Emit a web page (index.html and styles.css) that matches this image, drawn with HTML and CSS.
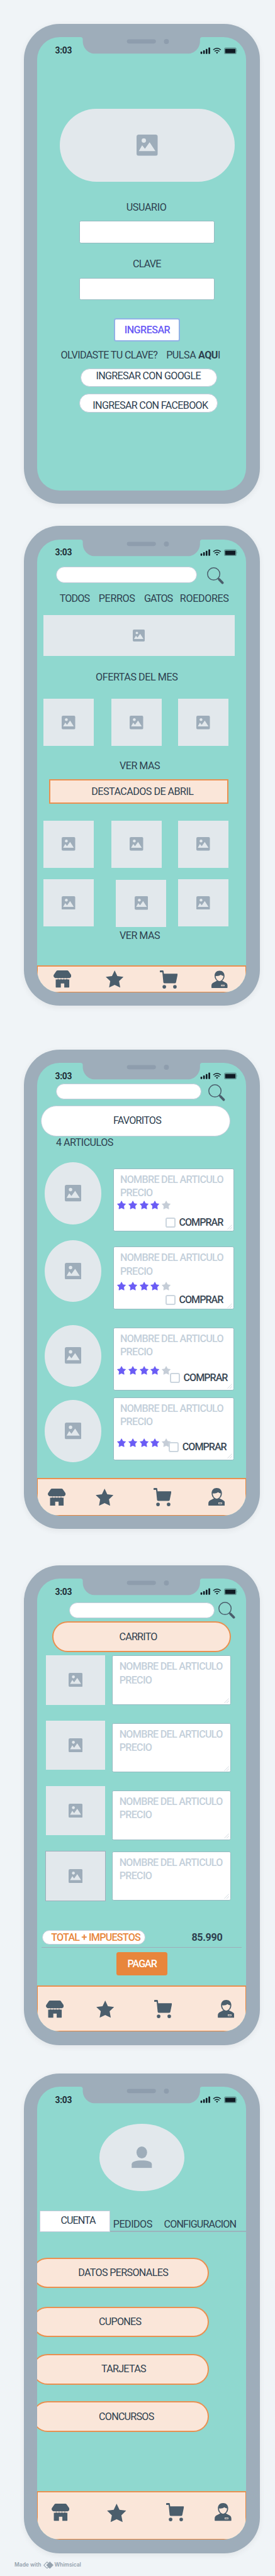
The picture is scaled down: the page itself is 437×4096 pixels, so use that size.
FILE: index.html
```html
<!DOCTYPE html>
<html lang="es">
<head>
<meta charset="utf-8">
<title>Tienda de mascotas</title>
<link rel="stylesheet" href="styles.css">
</head>
<body>
<svg class="defs" aria-hidden="true">
  <symbol id="notch" viewBox="0 0 218 30">
    <path fill="#9eadba" d="M0-1V0Q4 0 4 4V7C4 20 14 30 27 30H191C204 30 214 20 214 7V4Q214 0 218 0V-1Z"/>
    <rect x="83" y="4" width="52" height="7.5" rx="3.75" fill="#8e9dad"/>
    <circle cx="153.8" cy="8" r="4.5" fill="#8e9dad"/>
  </symbol>
  <symbol id="signal" viewBox="0 0 68 13">
    <g fill="#111b24"><rect x=".7" y="8" width="3" height="4" rx="1"/><rect x="5.4" y="5.6" width="3" height="6.4" rx="1"/><rect x="10.1" y="3.1" width="3" height="8.9" rx="1"/><rect x="14.9" y=".7" width="3" height="11.3" rx="1"/>
    <path d="M28.3 9.4q2-1.4 4 0l-2 2.4z"/><rect x="45" y="3" width="18.2" height="7.6" rx="1"/></g>
    <g fill="none" stroke="#111b24" stroke-width="1.8"><path d="M23.6 4.8q6.7-5.6 13.4 0"/><path d="M26 7.6q4.3-3.4 8.6 0"/></g>
    <rect x="43" y=".6" width="22.3" height="12.2" rx="3" fill="#111b24" opacity=".32"/>
    <path d="M66 4.6q1.6 2 0 4z" fill="#111b24" opacity=".4"/>
  </symbol>
  <symbol id="image" viewBox="0 0 38 38">
    <rect width="38" height="38" rx="4" fill="#9eadba"/>
    <circle cx="13" cy="10.8" r="3.9" fill="#e2e8ec"/>
    <path fill="#e2e8ec" d="M4 29.7 10 19.3 15 25.5 23.4 13.7 33.8 29.7Z"/>
  </symbol>
  <symbol id="search" viewBox="0 0 31 31">
    <circle cx="12" cy="12" r="11.1" fill="none" stroke="#4b5e6c" stroke-width="1.7"/>
    <path d="M19.5 19.5 22 22" stroke="#4b5e6c" stroke-width="2.4"/>
    <path d="M22 22 27.8 28" stroke="#4b5e6c" stroke-width="4.4" stroke-linecap="round"/>
  </symbol>
  <symbol id="store" viewBox="0 0 32 31">
    <path d="M7.5 0H24.5Q26 0 26.8 1L31.3 7.6Q33 10.5 30.5 12.8Q28.5 14.6 26 13.4Q23.8 14.8 21 13.5Q18.5 14.8 16 13.5Q13.5 14.8 11 13.5Q8.2 14.8 6 13.4Q3.5 14.6 1.5 12.8Q-1 10.5 .7 7.6L5.2 1Q6 0 7.5 0Z"/>
    <path d="M4 16.2Q6.5 17 8.5 15.6Q11 17 13.5 15.6Q16 17 18.5 15.6Q21 17 23.5 15.6Q26 17 28.3 16.2V30Q28.3 31 27.3 31H19.3V23.5H13.2V31H5Q4 31 4 30Z"/>
  </symbol>
  <symbol id="star" viewBox="0 0 32 31">
    <path d="M16 0 20.8 10.1 31.9 11.5 23.9 19.3 26 30.7 16 25.9 6 30.7 8.1 19.3 .1 11.5 11.2 10.1Z"/>
  </symbol>
  <symbol id="rate" viewBox="0 0 16 16">
    <path stroke-width="1" stroke-linejoin="round" stroke="currentColor" fill="currentColor" d="M8 .8 10.4 5.3 15.4 6.1 11.9 9.8 12.6 15 8 12.9 3.4 15 4.1 9.8 .6 6.1 5.6 5.3Z"/>
  </symbol>
  <symbol id="cart" viewBox="0 0 32 33">
    <path d="M1 0H5Q6.5 0 6.7 1.5L7.2 6H31Q32.2 6 31.9 7.2L28.9 21.8Q28.6 23 27.3 23H8Q6.5 23 6.3 21.5L4.5 3.5H1Q0 3.5 0 2.5V1Q0 0 1 0Z"/>
    <circle cx="8" cy="29.4" r="3.2"/><circle cx="27" cy="29.4" r="3.2"/>
  </symbol>
  <symbol id="user" viewBox="0 0 30 32">
    <path d="M15 0C20.5 0 24.2 3.8 24.2 9.5C24.2 13.5 22.6 16.5 20 18.3C22.5 21 30 21.5 30 27.5V31Q30 32 29 32H1Q0 32 0 31V27.5C0 21.5 7.5 21 10 18.3C7.4 16.5 5.8 13.5 5.8 9.5C5.8 3.8 9.5 0 15 0Z"/>
    <path fill="#fae6d9" d="M7.8 9.7Q13.5 10.3 17.5 7.6Q19.5 9.5 22.2 9.7C22.2 15 18.5 19.3 15 19.3S7.8 15 7.8 9.7Z"/>
    <rect x="18.4" y="26.5" width="5.6" height="1.9" fill="none" stroke="#fae6d9" stroke-width=".9"/>
  </symbol>
  <symbol id="person" viewBox="0 0 37 39">
    <ellipse cx="18.4" cy="10.7" rx="9.5" ry="10.7"/>
    <path d="M.3 38.6V32C.3 27 8 25 18.4 25S36.500 27 36.500 32V38.6Z"/>
  </symbol>
  <symbol id="grip" viewBox="0 0 9 9"><path d="M.5 8.5 8.5 .5M4.5 8.5 8.5 4.5" stroke="#c9d2da" stroke-width=".9"/></symbol>
</svg>

<main class="board">
  <section class="phone login">
    <div class="screen">
      <header class="status"><span class="time">3:03</span><svg class="notch"><use href="#notch"/></svg><svg class="signal"><use href="#signal"/></svg></header>
      <div class="hero ph"><svg><use href="#image"/></svg></div>
      <label class="t lb-user k4">USUARIO</label>
      <div class="field f1"></div>
      <label class="t lb-key k8">CLAVE</label>
      <div class="field f2"></div>
      <div class="enter t">INGRESAR</div>
      <div class="forgot"><span class="t k7">OLVIDASTE TU CLAVE?</span><span class="t pulsa k5">PULSA <b>AQU</b>I</span></div>
      <div class="pill google"><span class="t k7">INGRESAR CON GOOGLE</span></div>
      <div class="pill facebook"><span class="t k7">INGRESAR CON FACEBOOK</span></div>
    </div>
  </section>

  <section class="phone home">
    <div class="screen">
      <header class="status"><span class="time">3:03</span><svg class="notch"><use href="#notch"/></svg><svg class="signal"><use href="#signal"/></svg></header>
      <div class="search"><div class="pill"></div><svg><use href="#search"/></svg></div>
      <nav class="cats"><span class="t c1 k9">TODOS</span><span class="t c2 k4">PERROS</span><span class="t c3 k11">GATOS</span><span class="t c4 k4">ROEDORES</span></nav>
      <div class="banner ph"><svg><use href="#image"/></svg></div>
      <h2 class="t offers k5">OFERTAS DEL MES</h2>
      <div class="cards r1"><div class="ph"><svg><use href="#image"/></svg></div><div class="ph"><svg><use href="#image"/></svg></div><div class="ph"><svg><use href="#image"/></svg></div></div>
      <span class="t more m1">VER MAS</span>
      <div class="featured"><span class="t">DESTACADOS DE ABRIL</span></div>
      <div class="cards r2"><div class="ph"><svg><use href="#image"/></svg></div><div class="ph"><svg><use href="#image"/></svg></div><div class="ph"><svg><use href="#image"/></svg></div></div>
      <div class="cards r3"><div class="ph"><svg><use href="#image"/></svg></div><div class="ph"><svg><use href="#image"/></svg></div><div class="ph"><svg><use href="#image"/></svg></div></div>
      <span class="t more m2">VER MAS</span>
      <nav class="tabs"><svg class="i-store"><use href="#store"/></svg><svg class="i-star"><use href="#star"/></svg><svg class="i-cart"><use href="#cart"/></svg><svg class="i-user"><use href="#user"/></svg></nav>
    </div>
  </section>

  <section class="phone favs">
    <div class="screen">
      <header class="status"><span class="time">3:03</span><svg class="notch"><use href="#notch"/></svg><svg class="signal"><use href="#signal"/></svg></header>
      <div class="search"><div class="pill"></div><svg><use href="#search"/></svg></div>
      <div class="pill title"><span class="t k8">FAVORITOS</span></div>
      <span class="t count">4 ARTICULOS</span>
      <div class="list">
        <div class="pics"><div class="ph"><svg><use href="#image"/></svg></div><div class="ph"><svg><use href="#image"/></svg></div><div class="ph"><svg><use href="#image"/></svg></div><div class="ph"><svg><use href="#image"/></svg></div></div>
        <div class="items">
          <article class="item a1"><p class="t">NOMBRE DEL ARTICULO</p><p class="t">PRECIO</p><div class="stars"><svg><use href="#rate"/></svg><svg><use href="#rate"/></svg><svg><use href="#rate"/></svg><svg><use href="#rate"/></svg><svg class="off"><use href="#rate"/></svg></div><div class="buy"><i></i><span class="t k10">COMPRAR</span></div><svg class="grip"><use href="#grip"/></svg></article>
          <article class="item a2"><p class="t">NOMBRE DEL ARTICULO</p><p class="t">PRECIO</p><div class="stars"><svg><use href="#rate"/></svg><svg><use href="#rate"/></svg><svg><use href="#rate"/></svg><svg><use href="#rate"/></svg><svg class="off"><use href="#rate"/></svg></div><div class="buy"><i></i><span class="t k10">COMPRAR</span></div><svg class="grip"><use href="#grip"/></svg></article>
          <article class="item a3"><p class="t">NOMBRE DEL ARTICULO</p><p class="t">PRECIO</p><div class="stars"><svg><use href="#rate"/></svg><svg><use href="#rate"/></svg><svg><use href="#rate"/></svg><svg><use href="#rate"/></svg><svg class="off"><use href="#rate"/></svg></div><div class="buy"><i></i><span class="t k10">COMPRAR</span></div><svg class="grip"><use href="#grip"/></svg></article>
          <article class="item a4"><p class="t">NOMBRE DEL ARTICULO</p><p class="t">PRECIO</p><div class="stars"><svg><use href="#rate"/></svg><svg><use href="#rate"/></svg><svg><use href="#rate"/></svg><svg><use href="#rate"/></svg><svg class="off"><use href="#rate"/></svg></div><div class="buy"><i></i><span class="t k10">COMPRAR</span></div><svg class="grip"><use href="#grip"/></svg></article>
        </div>
      </div>
      <nav class="tabs"><svg class="i-store"><use href="#store"/></svg><svg class="i-star"><use href="#star"/></svg><svg class="i-cart"><use href="#cart"/></svg><svg class="i-user"><use href="#user"/></svg></nav>
    </div>
  </section>

  <section class="phone basket">
    <div class="screen">
      <header class="status"><span class="time">3:03</span><svg class="notch"><use href="#notch"/></svg><svg class="signal"><use href="#signal"/></svg></header>
      <div class="search"><div class="pill"></div><svg><use href="#search"/></svg></div>
      <div class="peach title"><span class="t k8">CARRITO</span></div>
      <div class="list">
        <div class="pics"><div class="ph"><svg><use href="#image"/></svg></div><div class="ph"><svg><use href="#image"/></svg></div><div class="ph"><svg><use href="#image"/></svg></div><div class="ph lined"><svg><use href="#image"/></svg></div></div>
        <div class="items">
          <article class="item"><p class="t">NOMBRE DEL ARTICULO</p><p class="t">PRECIO</p><svg class="grip"><use href="#grip"/></svg></article>
          <article class="item"><p class="t">NOMBRE DEL ARTICULO</p><p class="t">PRECIO</p><svg class="grip"><use href="#grip"/></svg></article>
          <article class="item"><p class="t">NOMBRE DEL ARTICULO</p><p class="t">PRECIO</p><svg class="grip"><use href="#grip"/></svg></article>
          <article class="item"><p class="t">NOMBRE DEL ARTICULO</p><p class="t">PRECIO</p><svg class="grip"><use href="#grip"/></svg></article>
        </div>
      </div>
      <div class="total"><div class="pill"><span class="t k8">TOTAL + IMPUESTOS</span></div><b class="t sum">85.990</b></div>
      <div class="rule"></div>
      <div class="pay t k10">PAGAR</div>
      <nav class="tabs"><svg class="i-store"><use href="#store"/></svg><svg class="i-star"><use href="#star"/></svg><svg class="i-cart"><use href="#cart"/></svg><svg class="i-user"><use href="#user"/></svg></nav>
    </div>
  </section>

  <section class="phone account">
    <div class="screen">
      <header class="status"><span class="time">3:03</span><svg class="notch"><use href="#notch"/></svg><svg class="signal"><use href="#signal"/></svg></header>
      <div class="avatar ph"><svg><use href="#person"/></svg></div>
      <div class="sections"><div class="current"><span class="t k10">CUENTA</span></div><div class="others"><span class="t">PEDIDOS</span><span class="t conf k9">CONFIGURACION</span></div></div>
      <div class="peach o1"><span class="t k7">DATOS PERSONALES</span></div>
      <div class="peach o2"><span class="t k8">CUPONES</span></div>
      <div class="peach o3"><span class="t k8">TARJETAS</span></div>
      <div class="peach o4"><span class="t k8">CONCURSOS</span></div>
      <nav class="tabs"><svg class="i-store"><use href="#store"/></svg><svg class="i-star"><use href="#star"/></svg><svg class="i-cart"><use href="#cart"/></svg><svg class="i-user"><use href="#user"/></svg></nav>
    </div>
  </section>

  <footer class="made"><span class="mw">Made with</span><svg viewBox="0 0 18 13"><path d="M11.5 .5 17.5 6.5 11.5 12.5 5.5 6.5Z" fill="#94a1ad" stroke="#94a1ad" stroke-linejoin="round"/><path d="M8.5 2.800 6.5 .8 .8 6.5 6.5 12.2 8.5 10.2" fill="none" stroke="#94a1ad" stroke-width="1.2" stroke-linejoin="round"/></svg><span>Whimsical</span></footer>
</main>
</body>
</html>
```

FILE: styles.css
```css
/* 1rem = ten design units */
html { font-size: 8.87px; }
* { box-sizing: border-box; }
body { margin: 0; background: #f0f4f7; font-family: Roboto, "Open Sans", sans-serif; color: #2e404f; }
h2, p { margin: 0; }
svg { display: block; flex: none; }
.defs { position: absolute; width: 0; height: 0; }

.board { width: 437px; height: 4096px; overflow: hidden; display: flex; flex-direction: column; align-items: flex-start; }

.phone { flex: none; width: 42.28rem; height: 86rem; margin-left: 4.23rem; padding: 2.4rem; border-radius: 6.4rem; background: #9eadba; box-shadow: 0 .3rem 1rem rgba(60, 60, 60, .08); }
.login { margin-top: 4.3rem; }
.home { margin-top: 4rem; }
.favs { margin-top: 7.83rem; }
.basket { margin-top: 6.47rem; }
.account { margin-top: 5.1rem; }
.screen { height: 81.2rem; border-radius: 4rem; background: #8fd8cf; overflow: hidden; display: flex; flex-direction: column; align-items: flex-start; }
.screen > * { flex: none; }

.status { display: flex; height: 3rem; align-items: flex-start; }
.time { width: 7.77rem; padding-left: 3.25rem; margin-top: 1.42rem; font-size: 1.55rem; line-height: 2rem; font-weight: 700; letter-spacing: -.03rem; color: #1d2a35; }
.notch { width: 21.8rem; height: 3rem; overflow: visible; }
.signal { width: 6.8rem; height: 1.3rem; margin: 1.7rem 0 0 -.4rem; }

/* labels, with tracking steps */
.t { font-size: 1.82rem; line-height: 2.4rem; font-weight: 400; letter-spacing: -.06rem; white-space: nowrap; }
.k4 { letter-spacing: -.04rem; }
.k5 { letter-spacing: -.05rem; }
.k7 { letter-spacing: -.075rem; }
.k8 { letter-spacing: -.085rem; }
.k9 { letter-spacing: -.095rem; }
.k10 { letter-spacing: -.115rem; }
.k11 { letter-spacing: -.13rem; }

.ph { display: flex; align-items: center; justify-content: center; background: #e2e8ec; }
.pill { background: #fff; border: 1px solid #c4cbd9; border-radius: 4rem; display: flex; align-items: flex-start; }
.peach { background: #fae6d9; border: 2px solid #ea9050; border-radius: 4rem; display: flex; align-items: flex-start; }
.search { display: flex; align-items: flex-start; }
.search svg { width: 3.08rem; height: 3.08rem; }

/* sign in */
.hero { width: 31.3rem; height: 13.07rem; margin: 9.83rem 0 0 4.07rem; border-radius: 6.6rem; }
.hero svg { width: 3.8rem; height: 3.8rem; }
.lb-user { margin: 3.4rem 0 0 16rem; }
.field { width: 24.25rem; height: 3.97rem; margin-left: 7.6rem; background: #fff; border: 1px solid #94b9c0; border-radius: .3rem; }
.f1 { margin-top: 1.23rem; }
.lb-key { margin: 2.5rem 0 0 17.15rem; }
.f2 { margin-top: 1.3rem; }
.enter { display: flex; align-items: center; justify-content: center; width: 11.85rem; height: 4.1rem; margin: 3.34rem 0 0 13.82rem; background: #fff; border: 2px solid #92b2e6; border-radius: .4rem; color: #6a5cf5; font-weight: 500; }
.forgot { display: flex; margin: 1.23rem 0 0 4.25rem; }
.forgot .t:first-child { width: 18.9rem; }
.google { width: 24.45rem; height: 3.2rem; margin: 1.27rem 0 0 7.8rem; padding-left: 2.65rem; }
.facebook { width: 24.8rem; height: 3.4rem; margin: 1.23rem 0 0 7.57rem; padding: .8rem 0 0 2.3rem; }

/* catalogue */
.home .search { margin: 1.9rem 0 0 3.35rem; height: 2.9rem; }
.home .search .pill { width: 25.35rem; height: 2.9rem; margin-right: 1.72rem; }
.home .search svg { margin-top: .1rem; }
.cats { display: flex; margin: 1.6rem 0 0 4.05rem; }
.c1 { width: 7rem; }
.c2 { width: 8.15rem; }
.c3 { width: 6.4rem; }
.banner { width: 34.2rem; height: 7.33rem; margin: 1.73rem 0 0 1.17rem; }
.banner svg { width: 2.15rem; height: 2.15rem; }
.offers { margin: 2.64rem 0 0 10.52rem; }
.cards { display: flex; margin-left: 1.17rem; }
.cards .ph { width: 9rem; height: 8.43rem; }
.cards .ph:nth-child(2) { margin: 0 2.9rem 0 3.2rem; }
.cards svg { width: 2.45rem; height: 2.45rem; }
.r1 { margin-top: 2.7rem; }
.m1 { margin-top: 2.37rem; }
.more { margin-left: 14.8rem; }
.featured { width: 32.1rem; height: 4.34rem; margin: 1.23rem 0 0 2.17rem; padding: .7rem 0 0 7.35rem; background: #fae6d9; border: 2px solid #ea9050; }
.r2 { margin-top: 3.06rem; }
.r3 { margin-top: 2.07rem; height: 8.43rem; }
.r3 .ph:nth-child(2) { margin: .1rem 2.1rem 0 4rem; }
.m2 { margin-top: .5rem; }

/* bottom navigation */
.tabs { display: flex; align-items: flex-start; align-self: stretch; margin-top: auto; background: #fae6d9; border: 1px solid #e8863c; border-top: 2px solid #ea9050; fill: #4b5e6c; }
.i-store { width: 3.2rem; height: 3.1rem; margin-top: .1rem; }
.i-star { width: 3.2rem; height: 3.1rem; margin-top: .1rem; }
.i-cart { width: 3.2rem; height: 3.3rem; }
.i-user { width: 3.03rem; height: 3.2rem; }
.home .tabs { height: 4.87rem; padding: .65rem 0 0 2.85rem; }
.home .i-star { margin-left: 6.1rem; }
.home .i-cart { margin-left: 6.6rem; }
.home .i-user { margin-left: 6.05rem; width: 2.9rem; }

/* favourites */
.favs .search { margin: .77rem 0 0 3.35rem; height: 2.8rem; }
.favs .search .pill { width: 26.1rem; height: 2.8rem; margin-right: 1.27rem; }
.favs .search svg { margin-top: .1rem; }
.favs .title { width: 33.95rem; height: 5.5rem; margin: 1.1rem 0 0 .7rem; padding: 1.4rem 0 0 12.85rem; }
.count { margin: -.1rem 0 0 3.4rem; }
.list { display: flex; align-items: flex-start; }
.favs .list { padding-left: 1.37rem; }
.favs .pics { width: 12.25rem; padding-top: 2.4rem; }
.favs .pics .ph { width: 10.2rem; height: 11.1rem; border-radius: 50%; }
.favs .pics .ph:nth-child(2) { margin-top: 2.8rem; }
.favs .pics .ph:nth-child(3) { margin-top: 4.1rem; }
.favs .pics .ph:nth-child(4) { margin-top: 2.4rem; }
.favs .pics svg { width: 3rem; height: 3rem; }
.item { position: relative; background: #fff; border: 1px solid #94b9c0; border-radius: .3rem; padding: .67rem 0 0 1.17rem; }
.item p { color: #c3cfda; font-weight: 500; letter-spacing: -.08rem; }
.item .grip { position: absolute; right: .15rem; bottom: .15rem; width: .95rem; height: .95rem; }
.favs .item { width: 21.65rem; height: 11.27rem; }
.a1 { margin-top: 3.5rem; }
.a2 { margin-top: 2.73rem; }
.a3 { margin-top: 3.23rem; }
.a4 { margin-top: 1.23rem; }
.stars { display: flex; gap: .4rem; margin-left: -.55rem; color: #6a5cf5; height: 1.6rem; }
.stars svg { width: 1.6rem; height: 1.6rem; }
.stars .off { color: #c5cdd7; }
.a1 .stars { margin-top: .15rem; }
.a2 .stars { margin-top: .75rem; }
.a3 .stars { margin-top: 1.27rem; }
.a4 .stars { margin-top: 1.75rem; }
.buy { position: relative; display: flex; align-items: center; height: 1.8rem; }
.buy i { width: 1.8rem; height: 1.8rem; margin-right: .65rem; background: #fff; border: 2px solid #ccd6df; border-radius: .35rem; }
.buy .t { font-weight: 500; color: #3a4856; }
.a1 .buy { margin: 1.4rem 0 0 8.1rem; }
.a2 .buy { margin: .7rem 0 0 8.1rem; }
.a3 .buy { margin: -.35rem 0 0 8.9rem; }
.a4 .buy { margin: -.9rem 0 0 8.7rem; }
.favs .tabs { height: 6.8rem; padding: 1.58rem 0 0 1.88rem; }
.favs .i-star { margin-left: 5.3rem; }
.favs .i-cart { margin-left: 7.2rem; }
.favs .i-user { margin-left: 6.55rem; }

/* basket */
.basket .search { margin: 1.3rem 0 0 5.75rem; height: 2.83rem; }
.basket .search .pill { width: 26.1rem; height: 2.83rem; margin-right: .67rem; }
.basket .search svg { margin-top: -.2rem; }
.basket .title { width: 32.1rem; height: 5.45rem; margin: .57rem 0 0 2.7rem; padding: 1.27rem 0 0 11.8rem; }
.basket .list { padding: .65rem 0 0 1.57rem; height: 45.2rem; }
.basket .pics { width: 11.9rem; }
.basket .pics .ph { width: 10.6rem; height: 8.8rem; margin-bottom: 2.9rem; }
.basket .pics .lined { border: 1.500px solid #9eadba; width: 10.8rem; height: 8.97rem; margin: -.07rem 0 0 -.1rem; }
.basket .pics svg { width: 2.52rem; height: 2.52rem; }
.basket .item { width: 21.3rem; height: 8.85rem; margin-bottom: 3.25rem; }
.basket .item:last-child { margin: -1.2rem 0 0; }
.total { display: flex; align-items: center; height: 2.57rem; margin: 4.65rem 0 0 .97rem; }
.total .pill { width: 18.4rem; height: 2.57rem; padding-left: 1.45rem; align-items: center; }
.total .pill .t { color: #e8863c; font-weight: 500; }
.total .sum { margin-left: 8.33rem; font-weight: 700; letter-spacing: -.04rem; }
.rule { width: 35.9rem; height: .17rem; margin: .45rem 0 0 .8rem; background: #9eadba; }
.pay { display: flex; justify-content: center; width: 9.1rem; height: 4.2rem; margin: .77rem 0 0 14.27rem; padding-top: .85rem; background: #e8863c; border-radius: .4rem; color: #fff; font-weight: 500; }
.basket .tabs { height: 8.27rem; padding: 2.38rem 0 0 1.48rem; }
.basket .i-star { margin-left: 5.87rem; }
.basket .i-cart { margin-left: 7.1rem; }
.basket .i-user { margin-left: 8.17rem; }

/* account */
.avatar { width: 15.2rem; height: 12.1rem; margin: 3.6rem 0 0 11.17rem; border-radius: 50%; fill: #9eadba; }
.avatar svg { width: 3.7rem; height: 3.9rem; }
.sections { display: flex; align-items: flex-start; align-self: stretch; height: 3.8rem; margin: 3.47rem 0 0 .5rem; }
.current { width: 12.65rem; height: 3.8rem; padding: .5rem 0 0 3.65rem; background: #fff; border: 1px solid #c4cbd9; }
.others { display: flex; flex: 1; height: 3.8rem; padding: 1.3rem 0 0 .5rem; border-bottom: 2px solid #9bb3bd; }
.others .t:first-child { width: 9.1rem; }
.account .peach { width: 31.7rem; height: 5.47rem; margin-left: -.9rem; padding-top: 1.25rem; }
.account .o1 { margin-top: 4.67rem; padding-left: 8.05rem; }
.account .o2 { margin-top: 3.3rem; padding-left: 11.75rem; }
.account .o3 { margin-top: 3.06rem; padding-left: 12.2rem; }
.account .o4 { margin-top: 3rem; padding-left: 11.75rem; }
.account .tabs { height: 8.77rem; padding: 1.98rem 0 0 2.48rem; }
.account .i-star { width: 3.45rem; height: 3.34rem; margin-left: 6.77rem; }
.account .i-cart { margin-left: 7.15rem; }
.account .i-user { margin-left: 5.5rem; }

.made { display: flex; align-items: center; height: 1.8rem; margin: 1.23rem 0 0 2.6rem; font: 600 .95rem/1.8rem Inter, sans-serif; color: #94a1ad; white-space: nowrap; }
.made svg { width: 1.8rem; height: 1.3rem; margin: 0 .15rem 0 .35rem; }
.mw { width: 4.85rem; }
```
